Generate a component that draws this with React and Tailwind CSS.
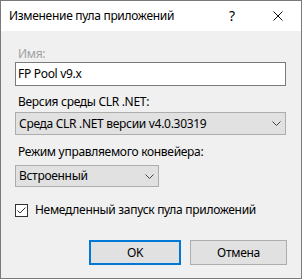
import React from "react";

function Chevron() {
  return (
    <svg width="9" height="5" viewBox="0 0 9 5" className="block">
      <path d="M0.5 0.5 L4.5 4.5 L8.5 0.5" fill="none" stroke="#444" strokeWidth="1" />
    </svg>
  );
}

export default function App() {
  const font = { fontFamily: '"Noto Sans", "Liberation Sans", sans-serif' };
  return (
    <div className="w-[302px] h-[279px] border border-[#7a7a7a] bg-[#f0f0f0] flex flex-col text-[12px] leading-[16px] tracking-[-0.3px] text-black" style={font}>
      <div className="h-[30px] bg-white flex items-center shrink-0">
        <div className="ml-[8px] flex-1">Изменение пула приложений</div>
        <div className="w-[10px] text-[14px] mr-[36px] text-center">?</div>
        <div className="mr-[18px]">
          <svg width="10" height="10" viewBox="0 0 10 10" className="block">
            <path d="M0.5 0.5 L9.5 9.5 M9.5 0.5 L0.5 9.5" stroke="#111" strokeWidth="1" />
          </svg>
        </div>
      </div>
      <div className="flex flex-col pl-[14px]">
        <div className="mt-[15px] pl-[3px] text-[#a0a0a0] h-[16px]">Имя:</div>
        <div className="w-[271px] h-[24px] border border-[#7a7a7a] bg-white flex items-center pl-[2px]">FP Pool v9.x</div>
        <div className="mt-[8px] pl-[3px] h-[16px]">Версия среды CLR .NET:</div>
        <div className="mt-[2px] w-[271px] h-[23px] border border-[#adadad] bg-[#e1e1e1] flex items-center justify-between pl-[3px] pr-[4px]">
          <span>Среда CLR .NET версии v4.0.30319</span>
          <Chevron />
        </div>
        <div className="mt-[9px] pl-[3px] h-[16px]">Режим управляемого конвейера:</div>
        <div className="mt-[5px] w-[144px] h-[22px] border border-[#adadad] bg-[#e1e1e1] flex items-center justify-between pl-[3px] pr-[4px]">
          <span>Встроенный</span>
          <Chevron />
        </div>
        <div className="mt-[15px] h-[16px] flex items-center">
          <div className="w-[13px] h-[13px] border border-[#333] bg-white flex items-center justify-center">
            <svg width="11" height="11" viewBox="0 0 11 11" className="block">
              <path d="M1.5 5.5 L4 8 L9.5 2.5" fill="none" stroke="#333" strokeWidth="1" />
            </svg>
          </div>
          <span className="ml-[7px]">Немедленный запуск пула приложений</span>
        </div>
        <div className="mt-[22px] flex justify-end pr-[14px] gap-[9px]">
          <button className="w-[92px] h-[25px] border-2 border-[#0078d7] bg-[#e1e1e1] flex items-center justify-center">OK</button>
          <button className="w-[97px] h-[25px] border border-[#adadad] bg-[#e1e1e1] flex items-center justify-center">Отмена</button>
        </div>
      </div>
    </div>
  );
}
